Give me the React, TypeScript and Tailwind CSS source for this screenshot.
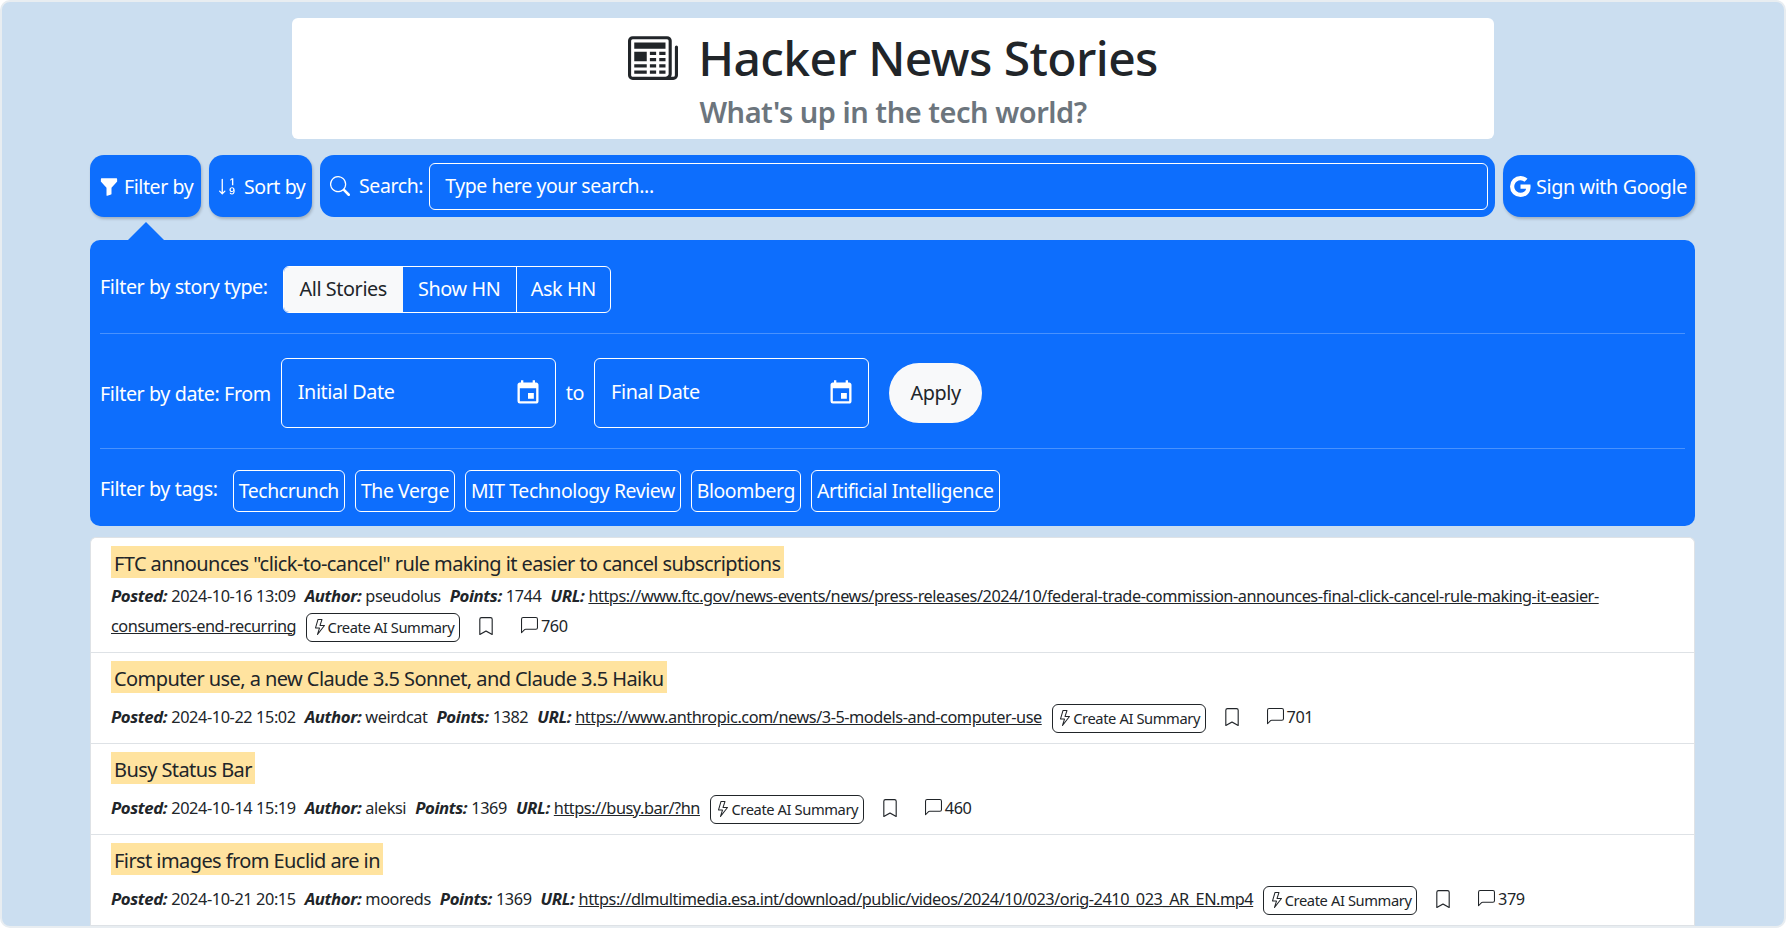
import { BsBookmark, BsChatLeft, BsFunnelFill, BsGoogle, BsLightning, BsNewspaper, BsSearch, BsSortNumericDown } from "react-icons/bs";
import { MdEvent } from "react-icons/md";

const stories = [
  {
    title: 'FTC announces "click-to-cancel" rule making it easier to cancel subscriptions',
    posted: "2024-10-16 13:09",
    author: "pseudolus",
    points: 1744,
    url: "https://www.ftc.gov/news-events/news/press-releases/2024/10/federal-trade-commission-announces-final-click-cancel-rule-making-it-easier-consumers-end-recurring",
    comments: 760,
  },
  {
    title: "Computer use, a new Claude 3.5 Sonnet, and Claude 3.5 Haiku",
    posted: "2024-10-22 15:02",
    author: "weirdcat",
    points: 1382,
    url: "https://www.anthropic.com/news/3-5-models-and-computer-use",
    comments: 701,
  },
  {
    title: "Busy Status Bar",
    posted: "2024-10-14 15:19",
    author: "aleksi",
    points: 1369,
    url: "https://busy.bar/?hn",
    comments: 460,
  },
  {
    title: "First images from Euclid are in",
    posted: "2024-10-21 20:15",
    author: "mooreds",
    points: 1369,
    url: "https://dlmultimedia.esa.int/download/public/videos/2024/10/023/orig-2410_023_AR_EN.mp4",
    comments: 379,
  },
];

const tags = ["Techcrunch", "The Verge", "MIT Technology Review", "Bloomberg", "Artificial Intelligence"];

function Meta({ label, value }: { label: string; value: string | number }) {
  return (
    <>
      <b className="text-[16.8px] font-bold italic">{label}:</b>
      <span className="mr-[9px] ml-[4px]">{value}</span>
    </>
  );
}

function DateField({ label }: { label: string }) {
  return (
    <div className="flex h-[70px] w-[275px] items-center justify-between rounded-md border border-white pl-[16px] pr-[13px] text-[19.8px]">
      <span className="-mt-[2px]">{label}</span>
      <MdEvent className="size-[28px]" />
    </div>
  );
}

export default function App() {
  return (
    <div
      className="h-screen overflow-hidden rounded-[10px] border-2 border-[#e8edf1] bg-[#cbdef0] tracking-[-0.4px] text-[#212529]"
      style={{ fontFamily: '"Noto Sans", sans-serif' }}
    >
      <header className="mx-auto mt-[16px] flex h-[121px] w-[1202px] flex-col items-center rounded-md bg-white">
        <h1 className="mt-[9px] flex items-center gap-[20px] text-[48px] leading-[62px] font-medium tracking-[-0.58px]">
          <BsNewspaper className="size-[50px]" />
          Hacker News Stories
        </h1>
        <h2 className="mt-[3px] text-[29px] leading-[40px] font-semibold tracking-[-0.48px] text-[#6c757d]">What's up in the tech world?</h2>
      </header>

      <main className="mt-[16px] mr-[89px] ml-[88px]">
        <div className="flex h-[62px] gap-[8px] text-[19.5px] text-white">
          <button className="flex w-[111px] items-center gap-[5px] rounded-[14px] bg-[#0d6efd] pt-[1px] pl-[9px] shadow-[1px_2px_3px_rgba(0,0,0,0.2)]">
            <BsFunnelFill className="size-[20px]" /> Filter by
          </button>
          <button className="flex w-[103px] items-center gap-[6px] rounded-[14px] bg-[#0d6efd] pt-[1px] pl-[8px] shadow-[1px_2px_3px_rgba(0,0,0,0.2)]">
            <BsSortNumericDown className="size-[21px]" /> Sort by
          </button>
          <div className="flex flex-1 items-center gap-[6px] rounded-[14px] bg-[#0d6efd] pr-[7px] pl-[10px]">
            <BsSearch className="mr-[3px] size-[20px]" />
            <span>Search:</span>
            <div className="flex h-[47px] flex-1 items-center rounded-md border border-white pl-[15px]">Type here your search...</div>
          </div>
          <button className="flex w-[192px] items-center gap-[5px] rounded-[18px] bg-[#0d6efd] pt-[1px] pl-[7px] text-[19.8px] shadow-[1px_2px_3px_rgba(0,0,0,0.2)]">
            <BsGoogle className="size-[21px]" /> Sign with Google
          </button>
        </div>

        <section className="relative mt-[23px] h-[286px] rounded-[10px] bg-[#0d6efd] px-[10px] text-[19.8px] text-white">
          <div className="absolute -top-[18px] left-[38px] size-0 border-x-[18px] border-b-[18px] border-x-transparent border-b-[#0d6efd]" />
          <div className="flex h-[94px] items-center gap-[15px] border-b border-white/25 pt-[5px]">
            <span className="-mt-[4px] text-[19.7px]">Filter by story type:</span>
            <div className="flex h-[47px] overflow-hidden rounded-md border border-white">
              <span className="flex w-[119px] items-center justify-center bg-[#f8f9fa] text-[#212529]">All Stories</span>
              <span className="flex w-[114px] items-center justify-center border-r border-white">Show HN</span>
              <span className="flex flex-1 items-center justify-center px-[14px]">Ask HN</span>
            </div>
          </div>
          <div className="flex h-[115px] items-center border-b border-white/25 pt-[3px]">
            <span className="mt-[2px] mr-[10px] text-[19.7px]">Filter by date: From</span>
            <DateField label="Initial Date" />
            <span className="mx-[10px]">to</span>
            <DateField label="Final Date" />
            <button className="ml-[20px] h-[60px] w-[93px] rounded-[30px] bg-[#f8f9fa] text-[#212529]">Apply</button>
          </div>
          <div className="flex items-center gap-[10px] pt-[21px] text-[19.4px]">
            <span className="mr-[5px] -mt-[4px] text-[19.7px]">Filter by tags:</span>
            {tags.map((tag) => (
              <span key={tag} className="flex h-[42px] items-center rounded-md border border-white px-[5px]">
                {tag}
              </span>
            ))}
          </div>
        </section>

        <ul className="mt-[11px] rounded-t-md border border-b-0 border-[#dee2e6] bg-white pb-[40px]">
          {stories.map((story) => (
            <li key={story.title} className="border-b border-[#dee2e6] px-[20px] pt-[8px] pb-[5px]">
              <div>
                <span className="inline-block h-[32px] bg-[#ffe39f] px-[3px] text-[20px] leading-[35px] tracking-[-0.58px]">{story.title}</span>
              </div>
              <p className="mt-[6px] text-[16.3px] leading-[24px] text-[#212529]">
                <Meta label="Posted" value={story.posted} />
                <Meta label="Author" value={story.author} />
                <Meta label="Points" value={story.points} />
                <b className="text-[16.8px] font-bold italic">URL:</b>
                <a href="#" className="ml-[4px] tracking-[-0.45px] underline">{story.url}</a>
                <span className="my-[5px] ml-[10px] inline-flex h-[29px] items-center rounded-md border border-[#212529] px-[4.5px] pb-[1px] align-middle text-[14.7px]">
                  <BsLightning className="size-[16px]" />Create AI Summary
                </span>
                <BsBookmark className="ml-[17px] inline size-[18px] align-[-3px]" />
                <BsChatLeft className="ml-[26px] inline size-[17px] align-[-2px]" />
                <span className="ml-[3px]">{story.comments}</span>
              </p>
            </li>
          ))}
        </ul>
      </main>
    </div>
  );
}
